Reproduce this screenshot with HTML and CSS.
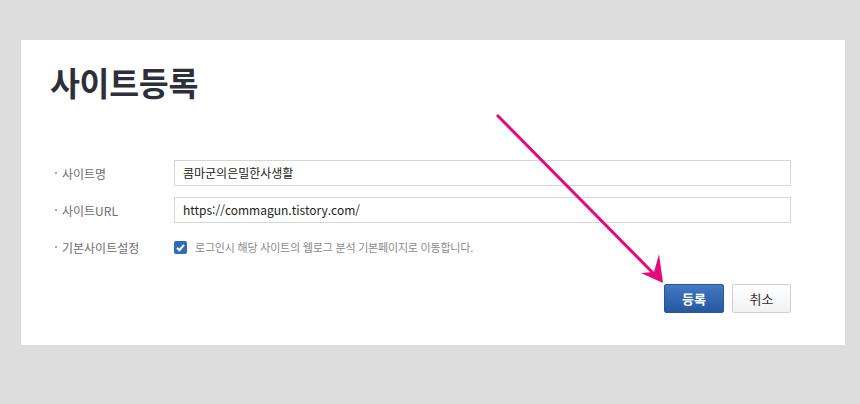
FILE: index.html
```html
<!DOCTYPE html>
<html lang="ko">
<head>
<meta charset="utf-8">
<title>사이트등록</title>
<link rel="stylesheet" href="styles.css">
</head>
<body>
<div class="card">
  <h1 class="title">사이트등록</h1>
  <div class="form">
    <div class="row">
      <div class="label">사이트명</div>
      <div class="field"><div class="input">콤마군의은밀한사생활</div></div>
    </div>
    <div class="row">
      <div class="label">사이트URL</div>
      <div class="field"><div class="input">https://commagun.tistory.com/</div></div>
    </div>
    <div class="row">
      <div class="label">기본사이트설정</div>
      <div class="field check-field">
        <span class="checkbox"><svg width="13" height="13" viewBox="0 0 13 13"><rect x="0" y="0" width="13" height="13" rx="2" fill="#2f6cb4"/><path d="M3 6.8 L5.4 9.2 L10 3.9" fill="none" stroke="#fff" stroke-width="2"/></svg></span>
        <span class="desc">로그인시 해당 사이트의 웹로그 분석 기본페이지로 이동합니다.</span>
      </div>
    </div>
    <div class="actions">
      <button class="btn btn-primary">등록</button>
      <button class="btn btn-default">취소</button>
    </div>
  </div>
</div>
<svg class="arrow" width="860" height="404" viewBox="0 0 860 404">
  <line x1="497" y1="115" x2="655" y2="275" stroke="#e5097f" stroke-width="3"/>
  <polygon points="663,283 659,254 654,272 641,273" fill="#e5097f"/>
</svg>
</body>
</html>
```

FILE: styles.css
```css
html, body {
  margin: 0;
  padding: 0;
}
body {
  background: #dcdddc;
  width: 860px;
  height: 404px;
  position: relative;
  font-family: "Noto Sans CJK KR", "Noto Sans", sans-serif;
  overflow: hidden;
}
.card {
  margin: 40px 0 0 21px;
  width: 824px;
  height: 305px;
  background: #fff;
  box-sizing: border-box;
  padding: 25px 54px 0 29px;
}
.title {
  margin: 0;
  font-size: 32.5px;
  line-height: 33px;
  font-weight: 700;
  color: #2d3039;
  letter-spacing: -0.3px;
}
.form {
  margin-top: 62px;
  padding-left: 5px;
}
.row {
  display: flex;
  align-items: center;
  height: 26px;
  margin-bottom: 11px;
}
.label {
  width: 119px;
  flex: none;
  font-size: 12px;
  color: #6e6e6e;
  position: relative;
  padding-left: 7px;
  box-sizing: border-box;
}
.label::before {
  content: "";
  position: absolute;
  left: 0;
  top: 50%;
  width: 2px;
  height: 2px;
  margin-top: -1px;
  background: #aaa;
}
.field {
  flex: 1;
}
.input {
  height: 26px;
  box-sizing: border-box;
  border: 1px solid #d6d6d6;
  padding: 0 8px;
  font-size: 12px;
  line-height: 24px;
  color: #222;
}
.check-field {
  display: flex;
  align-items: center;
}
.checkbox {
  display: flex;
  width: 13px;
  height: 13px;
  margin-right: 8px;
}
.desc {
  font-size: 11px;
  color: #8a8a8a;
  letter-spacing: -0.2px;
}
.actions {
  display: flex;
  justify-content: flex-end;
  gap: 8px;
  margin-top: 24px;
}
.btn {
  height: 29px;
  box-sizing: border-box;
  font-family: "Noto Sans CJK KR", sans-serif;
  font-size: 13px;
  border-radius: 2px;
  padding: 0;
  cursor: pointer;
}
.btn-primary {
  width: 60px;
  color: #fff;
  font-weight: 700;
  border: 1px solid #2a5694;
  background: linear-gradient(#4179c2, #2758a0);
}
.btn-default {
  width: 59px;
  color: #333;
  border: 1px solid #cfcfcf;
  background: linear-gradient(#fff, #f2f2f2);
}
.arrow {
  position: absolute;
  left: 0;
  top: 0;
  pointer-events: none;
}
```
